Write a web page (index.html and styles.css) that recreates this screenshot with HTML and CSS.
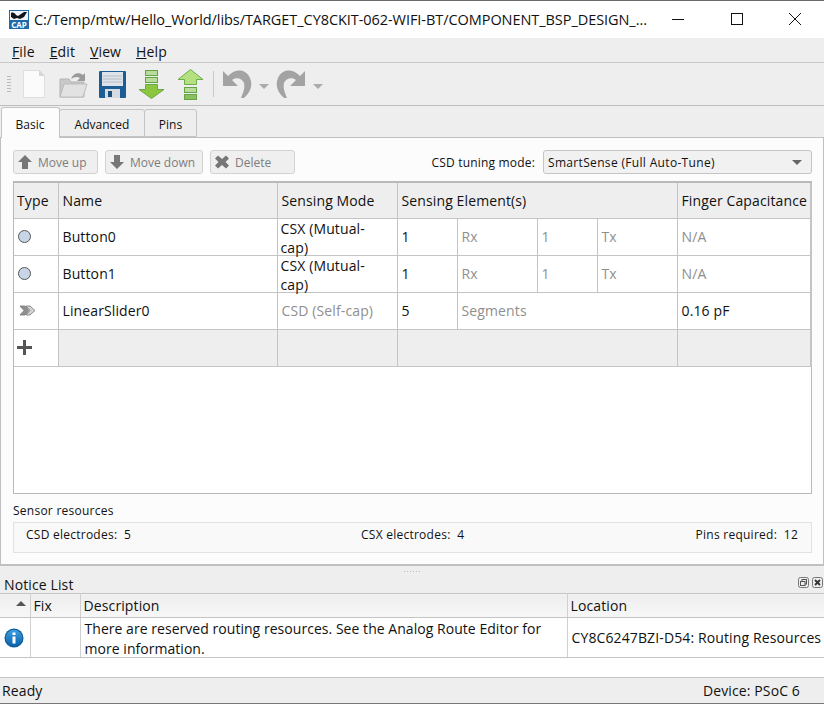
FILE: index.html
```html
<!DOCTYPE html>
<html lang="en">
<head>
  <meta charset="UTF-8" />
  <title>CapSense Configurator</title>
  <link rel="stylesheet" href="styles.css">
</head>
<body>
  <header class="titlebar">
    <svg class="app-logo" width="20" height="19" viewBox="0 0 20 19">
      <rect width="20" height="19" fill="#1f6aa8"/>
      <rect x="1" y="1" width="18" height="9" fill="#f2f6fa"/>
      <path d="M2 3c2-1 4 0 5 2l2 1 6-4 3 0-3 5-4 2-3-1-3 1-3-2z" fill="#10161c"/>
      <text x="10" y="18" class="logo-text" text-anchor="middle">CAP</text>
    </svg>
    <span class="title-text">C:/Temp/mtw/Hello_World/libs/TARGET_CY8CKIT-062-WIFI-BT/COMPONENT_BSP_DESIGN_...</span>
    <div class="win-btns">
      <svg width="58" height="20" viewBox="0 0 58 20"><path d="M23 10.500h12" stroke="#111" fill="none"/></svg>
      <svg width="59" height="20" viewBox="0 0 59 20"><rect x="24.500" y="4.500" width="11" height="11" stroke="#111" fill="none"/></svg>
      <svg width="58" height="20" viewBox="0 0 58 20"><path d="M23 4l12 12M35 4L23 16" stroke="#111" fill="none"/></svg>
    </div>
  </header>

  <nav class="menubar">
    <span><u>F</u>ile</span>
    <span><u>E</u>dit</span>
    <span><u>V</u>iew</span>
    <span><u>H</u>elp</span>
  </nav>

  <div class="toolbar">
    <div class="grip"></div>
    <svg class="tool" width="30" height="32" viewBox="0 0 30 32">
      <path d="M4.500 2.500h16l5 5v22h-21z" fill="#fbfbfb" stroke="#dedede"/>
      <path d="M20 2v6h6z" fill="#d6d6d6"/>
    </svg>
    <svg class="tool" width="30" height="32" viewBox="0 0 30 32">
      <path d="M2 11h9l2 3h13v15H2z" fill="#c9c9c9" stroke="#b5b5b5"/>
      <path d="M2 29l4-13h23l-4 13z" fill="#e2e2e2" stroke="#bcbcbc"/>
      <path d="M13 11c2-6 8-7 12-4l2-2v8h-8l3-3c-3-2-6-1-9 1z" fill="#9a9a9a"/>
    </svg>
    <svg class="tool" width="30" height="32" viewBox="0 0 30 32">
      <rect x="2" y="3" width="27" height="27" rx="1" fill="#1d5d96"/>
      <rect x="5" y="4" width="21" height="14" fill="#dde3e8"/>
      <path d="M6 8h19M6 11h19M6 14h19" stroke="#b6c0c8"/>
      <rect x="8" y="21" width="15" height="9" fill="#d5dbe0"/>
      <rect x="11" y="23" width="4" height="6" fill="#1d4f7d"/>
    </svg>
    <svg class="tool" width="30" height="32" viewBox="0 0 30 32">
      <rect x="9.500" y="2.500" width="12" height="5" fill="#b9dc9c" stroke="#63a544"/>
      <rect x="9.500" y="9.500" width="12" height="5" fill="#b9dc9c" stroke="#63a544"/>
      <path d="M9.500 16.500h12v5h6.500l-12.500 9-12.500-9h6.500z" fill="#8cc63f" stroke="#6aa84a"/>
    </svg>
    <svg class="tool" width="30" height="32" viewBox="0 0 30 32">
      <path d="M15.500 1.500l12.500 10h-6.500v5h-12v-5H3z" fill="#b4e07f" stroke="#6aad4c"/>
      <rect x="9.500" y="19.500" width="12" height="5" fill="#b9dc9c" stroke="#63a544"/>
      <rect x="9.500" y="26.500" width="12" height="5" fill="#8cc063" stroke="#63a544"/>
    </svg>
    <div class="tool-sep"></div>
    <svg class="tool-wide" width="30" height="32" viewBox="0 0 30 32">
      <path d="M1 3v15h15l-6-6c4-3 10-2 12 3 1 4 0 8-3 15h3c7-6 9-13 6-20C24 1 14 0 6 8z" fill="#a3a3a3"/>
    </svg>
    <span class="caret caret-tool"></span>
    <svg class="tool-wide" width="30" height="32" viewBox="0 0 30 32">
      <path d="M29 3v15H14l6-6c-4-3-10-2-12 3-1 4 0 8 3 15H8C1 24-1 17 2 10 6 1 16 0 24 8z" fill="#a3a3a3"/>
    </svg>
    <span class="caret caret-tool"></span>
  </div>

  <div class="tabs">
    <div class="tab tab-active">Basic</div>
    <div class="tab tab-adv">Advanced</div>
    <div class="tab tab-pins">Pins</div>
  </div>

  <main class="pane">
    <div class="actions">
      <button class="btn btn-up">
        <svg width="16" height="16" viewBox="0 0 16 16"><path d="M8 1l7 7h-4v7H5V8H1z" fill="#777"/></svg>Move up
      </button>
      <button class="btn btn-down">
        <svg width="16" height="16" viewBox="0 0 16 16"><path d="M8 15l7-7h-4V1H5v7H1z" fill="#777"/></svg>Move down
      </button>
      <button class="btn btn-del">
        <svg width="16" height="16" viewBox="0 0 16 16"><path d="M4 1.500l4 3.500 4-3.500 3 3L11.500 8l3.500 3.500-3 3L8 11l-4 3.500-3-3L4.500 8 1 4.500z" fill="#777"/></svg>Delete
      </button>
      <label class="mode-label">CSD tuning mode:</label>
      <div class="select">SmartSense (Full Auto-Tune)<span class="caret"></span></div>
    </div>

    <div class="table-box">
      <table class="widgets">
        <colgroup>
          <col class="c-type"><col class="c-name"><col class="c-mode">
          <col class="c-a"><col class="c-b"><col class="c-c"><col class="c-d"><col class="c-cap">
        </colgroup>
        <thead>
          <tr>
            <th>Type</th><th>Name</th><th>Sensing Mode</th>
            <th colspan="4">Sensing Element(s)</th><th>Finger Capacitance</th>
          </tr>
        </thead>
        <tbody>
          <tr>
            <td class="icon-cell"><span class="dot"></span></td><td>Button0</td>
            <td class="wrap"><div class="wrap-text">CSX (Mutual-cap)</div></td>
            <td>1</td><td class="dim">Rx</td><td class="dim">1</td><td class="dim">Tx</td><td class="dim">N/A</td>
          </tr>
          <tr>
            <td class="icon-cell"><span class="dot"></span></td><td>Button1</td>
            <td class="wrap"><div class="wrap-text">CSX (Mutual-cap)</div></td>
            <td>1</td><td class="dim">Rx</td><td class="dim">1</td><td class="dim">Tx</td><td class="dim">N/A</td>
          </tr>
          <tr>
            <td class="icon-cell">
              <svg class="slider-icon" width="17" height="11" viewBox="0 0 17 11">
                <path d="M1 1h5l4 4.500L6 10H1l4-4.500z" fill="#8f8f8f" stroke="#777" stroke-width=".8"/>
                <path d="M7 1h4l5 4.500-5 4.500H7l4-4.500z" fill="#d2d2d2" stroke="#777" stroke-width=".8"/>
              </svg>
            </td>
            <td>LinearSlider0</td><td class="dim">CSD (Self-cap)</td>
            <td>5</td><td class="dim" colspan="3">Segments</td><td>0.16 pF</td>
          </tr>
          <tr class="add-row">
            <td class="icon-cell add-cell">
              <svg class="plus-icon" width="17" height="17" viewBox="0 0 17 17"><path d="M7 1h3v6h6v3h-6v6H7v-6H1V7h6z" fill="#555"/></svg>
            </td>
            <td></td><td></td><td colspan="4"></td><td></td>
          </tr>
        </tbody>
      </table>
    </div>

    <div class="res-title">Sensor resources</div>
    <div class="res-box">
      <span>CSD electrodes:&nbsp; 5</span>
      <span>CSX electrodes:&nbsp; 4</span>
      <span>Pins required:&nbsp; 12</span>
    </div>
  </main>

  <div class="splitter"><span class="split-grip"></span></div>

  <section class="dock">
    <div class="dock-head">
      <span>Notice List</span>
      <div class="dock-btns">
        <svg width="11" height="11" viewBox="0 0 11 11"><rect x=".5" y=".5" width="10" height="10" rx="2" fill="none" stroke="#777"/><rect x="4" y="2.500" width="4.500" height="4.500" fill="none" stroke="#555"/><rect x="2.500" y="4.500" width="4.500" height="4" fill="#eee" stroke="#555"/></svg>
        <svg width="11" height="11" viewBox="0 0 11 11"><rect x=".5" y=".5" width="10" height="10" rx="2" fill="none" stroke="#777"/><path d="M3 3l5 5M8 3L3 8" stroke="#333" stroke-width="1.800"/></svg>
      </div>
    </div>
    <table class="notices">
      <colgroup><col class="n-icon"><col class="n-fix"><col class="n-desc"><col class="n-loc"></colgroup>
      <thead>
        <tr>
          <th class="sort-cell"><span class="sort-arrow"></span></th><th>Fix</th><th>Description</th><th>Location</th>
        </tr>
      </thead>
      <tbody>
        <tr>
          <td class="icon-cell">
            <svg width="20" height="20" viewBox="0 0 20 20">
              <defs>
                <linearGradient id="infoFill" x1="0" y1="0" x2="0" y2="1">
                  <stop offset="0" stop-color="#3d9ee0"/>
                  <stop offset="1" stop-color="#0b62ab"/>
                </linearGradient>
              </defs>
              <circle cx="10" cy="10" r="9.500" fill="#0c5b9e"/>
              <circle cx="10" cy="10" r="8.300" fill="url(#infoFill)"/>
              <rect x="8.500" y="8.500" width="3" height="7" fill="#fff"/>
              <rect x="8.500" y="4.500" width="3" height="2.500" fill="#fff"/>
            </svg>
          </td>
          <td></td>
          <td class="desc"><div class="desc-text">There are reserved routing resources. See the Analog Route Editor for more information.</div></td>
          <td class="nowrap">CY8C6247BZI-D54: Routing Resources</td>
        </tr>
      </tbody>
    </table>
    <div class="notice-empty"></div>
  </section>

  <footer class="statusbar">
    <span>Ready</span>
    <span>Device: PSoC 6</span>
  </footer>
</body>
</html>
```

FILE: styles.css
```css
* {
  box-sizing: border-box;
  margin: 0;
  padding: 0;
}

html, body {
  width: 824px;
  height: 704px;
  overflow: hidden;
}

body {
  font-family: 'Open Sans', 'Noto Sans', sans-serif;
  font-size: 14px;
  letter-spacing: 0.12px;
  background: #eeeeee;
  color: #111;
}

.titlebar {
  height: 38px;
  background: #fff;
  border-top: 1px solid #6b6b6b;
  display: flex;
  align-items: center;
  padding-left: 9px;
  padding-bottom: 1px;
}

.app-logo {
  flex: none;
}

.logo-text {
  font-size: 8px;
  font-weight: 700;
  fill: #fff;
  letter-spacing: 0;
}

.title-text {
  margin-left: 5px;
  font-size: 14.5px;
  letter-spacing: -0.06px;
  white-space: nowrap;
  flex: 1;
  overflow: hidden;
}

.win-btns {
  display: flex;
  flex: none;
}

.menubar {
  height: 24px;
  background: #eeeeee;
  display: flex;
  align-items: center;
  gap: 15px;
  padding-left: 12px;
  padding-top: 2px;
}

.toolbar {
  height: 44px;
  background: #eeeeee;
  border-top: 1px solid #c9c9c9;
  border-bottom: 1px solid #bdbdbd;
  display: flex;
  align-items: center;
  padding-left: 7px;
}

.grip {
  width: 4px;
  height: 18px;
  margin-right: 8px;
  background: radial-gradient(circle, #bbb 0.8px, transparent 1px) 0 0 / 2px 3px;
}

.tool {
  margin-right: 9px;
  flex: none;
}

.tool-sep {
  width: 1px;
  height: 26px;
  background: #c9c9c9;
  margin: 0 8px 0 -1px;
}

.tool-wide {
  flex: none;
}

.caret {
  width: 0;
  height: 0;
  border-left: 5px solid transparent;
  border-right: 5px solid transparent;
  border-top: 5px solid #666;
}

.caret-tool {
  border-top-color: #aaa;
  margin: 4px 7px 0 7px;
}

.tabs {
  height: 31px;
  display: flex;
  align-items: flex-end;
  padding-left: 1px;
  font-size: 12px;
  letter-spacing: 0;
  position: relative;
  z-index: 1;
}

.tab {
  height: 28px;
  border: 1px solid #c4c4c4;
  border-radius: 3px 3px 0 0;
  background: #eeeeee;
  display: flex;
  align-items: center;
  justify-content: center;
  margin-left: -1px;
  padding-top: 3px;
}

.tab-active {
  width: 59px;
  height: 31px;
  margin-left: 0;
  background: #fcfcfc;
  border-bottom: none;
  margin-bottom: -1px;
  padding-right: 1px;
  z-index: 2;
}

.tab-adv {
  width: 86px;
}

.tab-pins {
  width: 53px;
}

.pane {
  height: 429px;
  background: #fcfcfc;
  border: 1px solid #c0c0c0;
  border-width: 1px 1px 2px 1px;
  padding: 12px 11px 0 12px;
  font-size: 12px;
  letter-spacing: 0.25px;
}

.actions {
  display: flex;
  align-items: center;
  height: 24px;
}

.btn {
  height: 24px;
  border: 1px solid #d2d2d2;
  border-radius: 3px;
  background: #efefef;
  color: #7d7d7d;
  font: inherit;
  letter-spacing: 0;
  display: flex;
  align-items: center;
  gap: 5px;
  padding-left: 3px;
  margin-right: 7px;
}

.btn-up {
  width: 85px;
}

.btn-down {
  width: 98px;
}

.btn-del {
  width: 85px;
}

.mode-label {
  margin-left: auto;
  margin-right: 8px;
  letter-spacing: 0.18px;
}

.select {
  width: 269px;
  height: 24px;
  border: 1px solid #c4c4c4;
  border-radius: 3px;
  background: #f1f1f1;
  letter-spacing: 0.33px;
  display: flex;
  align-items: center;
  justify-content: space-between;
  padding: 0 9px 0 4px;
}

.table-box {
  margin-top: 7px;
  height: 313px;
  background: #fff;
  border: 1px solid #b9b9b9;
  border-top-width: 2px;
}

table {
  border-collapse: collapse;
  table-layout: fixed;
  font-size: 14px;
  letter-spacing: 0.12px;
}

.widgets {
  width: 797px;
  border-right: 2px solid #c4c4c4;
}

.c-type { width: 44px; }
.c-name { width: 219px; }
.c-mode { width: 120px; }
.c-a { width: 60px; }
.c-b { width: 80px; }
.c-c { width: 60px; }
.c-d { width: 80px; }
.c-cap { width: 134px; }

th {
  font-weight: 400;
  text-align: left;
  background: #eeeeee;
}

.widgets th,
.widgets td {
  height: 37px;
  border: 1px solid #c4c4c4;
  padding: 0 3px 0 4px;
  white-space: nowrap;
}

.widgets tr > :first-child {
  border-left: none;
  padding-left: 3px;
}

.widgets thead th {
  border-top: none;
  height: 35px;
}

.widgets td.wrap {
  white-space: normal;
  vertical-align: top;
  padding: 0 20px 0 3px;
}

/* two lines of 19px run slightly over the 37px row, as in the reference */
.wrap-text {
  line-height: 19px;
  margin-bottom: -2px;
}

.dim {
  color: #8f8f8f;
}

.icon-cell svg {
  display: block;
  margin: 0 auto;
}

.icon-cell .slider-icon {
  margin-left: 2px;
}

.icon-cell .plus-icon {
  margin-left: -1px;
}

.dot {
  display: block;
  width: 13px;
  height: 13px;
  margin-left: 1px;
  border-radius: 50%;
  background: #c8d5e6;
  border: 1px solid #555;
}

.add-row td {
  background: #eeeeee;
}

.add-row td.add-cell {
  background: #fff;
}

.res-title {
  margin-top: 8px;
  height: 17px;
  line-height: 17px;
}

.res-box {
  margin-top: 3px;
  height: 31px;
  border: 1px solid #e2e2e2;
  background: #f9f9f9;
  display: grid;
  grid-template-columns: 335px 1fr auto;
  padding: 3px 13px 0 12px;
  line-height: 17px;
}

.splitter {
  height: 10px;
  display: flex;
  justify-content: center;
}

.split-grip {
  width: 18px;
  height: 3px;
  margin-top: 4px;
  background: radial-gradient(circle, #bbb 0.7px, transparent 1px) 0 0 / 3px 3px;
}

.dock-head {
  height: 17px;
  display: flex;
  justify-content: space-between;
  align-items: center;
  padding: 0 1px 0 4px;
}

.dock-btns {
  display: flex;
  gap: 3px;
  margin-top: -4px;
}

.dock-btns svg {
  display: block;
}

.notices {
  width: 824px;
  background: #fff;
}

.n-icon { width: 30px; }
.n-fix { width: 50px; }
.n-desc { width: 487px; }
.n-loc { width: 257px; }

.notices th {
  height: 24px;
  border-top: 1px solid #c4c4c4;
  border-bottom: 1px solid #c4c4c4;
  border-right: 1px solid #d0d0d0;
  padding: 0 3px;
  background: linear-gradient(#eeeeee, #f7f7f7);
}

.notices td {
  height: 39px;
  border-bottom: 1px solid #c4c4c4;
  border-right: 1px solid #d0d0d0;
  padding: 0 3px 0 4px;
}

.desc-text {
  padding-top: 1px;
  margin-bottom: -2px;
  line-height: 20px;
  letter-spacing: 0.04px;
}

.notices td.icon-cell {
  padding: 0 0 0 4px;
}

.notices .icon-cell svg {
  margin: 0;
}

.nowrap {
  white-space: nowrap;
}

.sort-cell {
  text-align: right;
}

.sort-arrow {
  display: inline-block;
  width: 0;
  height: 0;
  margin: 0 1px 5px 0;
  border-left: 5px solid transparent;
  border-right: 5px solid transparent;
  border-bottom: 5px solid #555;
}

.notice-empty {
  height: 20px;
  background: #fff;
  border-bottom: 1px solid #c4c4c4;
}

.statusbar {
  height: 26px;
  display: flex;
  justify-content: space-between;
  align-items: center;
  padding: 0 24px 0 2px;
  border-bottom: 1px solid #777;
}
```
